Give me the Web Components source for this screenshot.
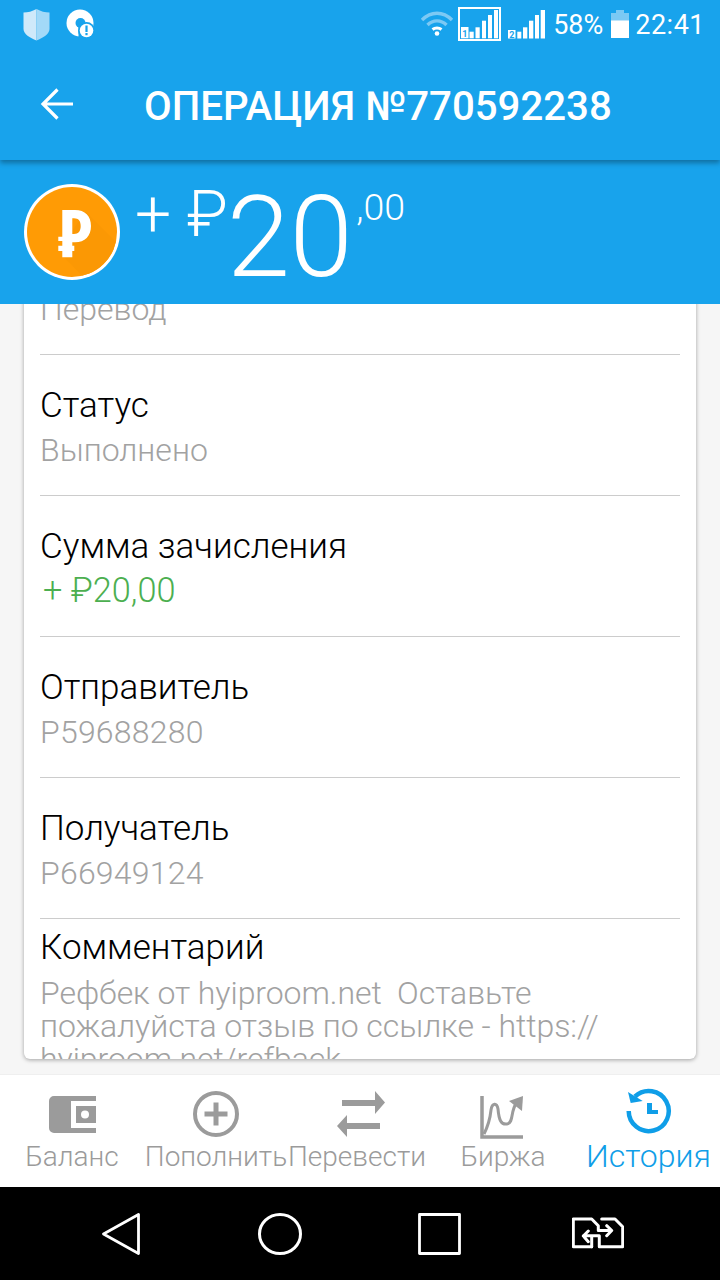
<!DOCTYPE html>
<html><head><meta charset="utf-8">
<style>html,body{margin:0;padding:0;background:#f5f5f5}body{width:720px;height:1280px;overflow:hidden;font-family:Roboto,"Noto Sans",sans-serif}</style>
</head><body>
<op-screen>
  <op-status slot="status"></op-status>
  <op-appbar slot="appbar" title="ОПЕРАЦИЯ №770592238"></op-appbar>
  <op-amount slot="amount"></op-amount>
  <op-card slot="content">
    <op-row label="Тип" value="Перевод"></op-row>
    <op-row label="Статус" value="Выполнено"></op-row>
    <op-row label="Сумма зачисления" value="+ ₽20,00" tone="green"></op-row>
    <op-row label="Отправитель" value="P59688280" tone="num"></op-row>
    <op-row label="Получатель" value="P66949124" tone="num"></op-row>
    <op-row label="Комментарий" value="Рефбек от hyiproom.net  Оставьте пожалуйста отзыв по ссылке - https:// hyiproom.net/refback" tone="long"></op-row>
  </op-card>
  <op-tabs slot="tabs"></op-tabs>
  <op-nav slot="nav"></op-nav>
</op-screen>
<script>
function def(name,html,init){
  customElements.define(name,class extends HTMLElement{
    connectedCallback(){
      if(this.shadowRoot)return;
      const r=this.attachShadow({mode:'open'});
      r.innerHTML=html;
      if(init)init(this,r);
    }
  });
}
def('op-screen',`<style>
:host{display:flex;flex-direction:column;width:720px;height:1280px;overflow:hidden;position:relative}
.top{background:#18a3ec;height:160px;flex:none;display:flex;flex-direction:column;box-shadow:0 3px 5px rgba(0,0,0,.32);position:relative;z-index:2}
.amt{flex:none;height:144px;position:relative;z-index:1}
.content{flex:1;min-height:0;overflow:hidden;background:#f6f6f6}
.tabs{flex:none;height:112px}.nav{flex:none;height:93px}
</style>
<div class="top"><slot name="status"></slot><slot name="appbar"></slot></div>
<div class="amt"><slot name="amount"></slot></div>
<div class="content"><slot name="content"></slot></div>
<div class="tabs"><slot name="tabs"></slot></div>
<div class="nav"><slot name="nav"></slot></div>`);

def('op-status',`<style>
:host{display:flex;align-items:center;height:50px;flex:none;color:#fff;font:400 27px Roboto,sans-serif;padding:0 15px 0 23px;box-sizing:border-box}
.sp{flex:1}svg{display:block;flex:none}
text{font:700 9px Roboto,sans-serif;fill:#18a3ec}
</style>
<svg width="27" height="33" viewBox="0 0 27 33" style="margin-top:-1px"><path d="M13.5 1 C9 3.5 5 4.5 .5 4.5 V21 C.5 26 7 30 13.5 32.5Z" fill="#cfe9fa"/><path d="M13.5 1 C18 3.5 22 4.5 26.5 4.5 V21 C26.5 26 20 30 13.5 32.5Z" fill="#a3d9f8"/></svg>
<svg width="30" height="30" viewBox="0 0 30 30" style="margin-left:16px;margin-top:-2px">
<circle cx="14" cy="14" r="13.500" fill="#fff"/><circle cx="14.500" cy="14" r="5" fill="#18a3ec"/><rect x="12.500" y="16" width="4" height="12" fill="#18a3ec"/><circle cx="20.500" cy="21.500" r="8.500" fill="#18a3ec"/><circle cx="20.500" cy="21.500" r="6.800" fill="#fff"/><rect x="19.400" y="16.500" width="2.200" height="6.500" fill="#18a3ec"/><rect x="19.400" y="24" width="2.200" height="2.200" fill="#18a3ec"/></svg>
<span class="sp"></span>
<svg width="34" height="26" viewBox="0 0 34 26" style="margin-right:4px;margin-top:-5px" fill="none">
<path d="M2 10 C11 1 23 1 32 10" stroke="#7cc9f4" stroke-width="3.400"/><path d="M7.500 15 C13 9.500 21 9.500 26.500 15" stroke="#7cc9f4" stroke-width="3.400"/><path d="M12.500 19.500 C15 17.500 19 17.500 21.500 19.500" stroke="#fff" stroke-width="3"/><circle cx="17" cy="23.500" r="2.300" fill="#fff"/></svg>
<svg width="44" height="35" viewBox="0 0 44 35" style="margin-right:6px;margin-top:-1px">
<rect x="1" y="1" width="41" height="32" fill="none" stroke="#fff" stroke-width="2"/>
<rect x="3" y="20" width="7.500" height="11.300" fill="#fff"/><text x="4.200" y="30">1</text>
<rect x="11.500" y="24.700" width="4.200" height="6.600" fill="#fff"/><rect x="17.500" y="20.300" width="4.200" height="11" fill="#fff"/><rect x="24" y="13.700" width="4" height="17.600" fill="#fff"/><rect x="30" y="8" width="4" height="23.300" fill="#fff"/><rect x="36" y="3" width="4" height="28.300" fill="#fff"/></svg>
<svg width="38" height="29" viewBox="0 0 38 29" style="margin-right:7px;margin-top:-2px">
<rect x="0" y="20" width="7.500" height="8.500" fill="#fff"/><text x="1.200" y="28">2</text>
<rect x="9.300" y="21.700" width="4" height="6.800" fill="#fff"/><rect x="15" y="17.300" width="4.300" height="11.200" fill="#fff"/><rect x="21" y="10.700" width="4.300" height="17.800" fill="#fff"/><rect x="27" y="5" width="4" height="23.500" fill="#fff"/><rect x="32.700" y="0" width="4.300" height="28.500" fill="#fff"/></svg>
<span style="margin-right:8px;margin-top:0">58%</span>
<svg width="18" height="28" viewBox="0 0 18 28" style="margin-right:6px;margin-top:-2px"><path d="M5 0h8v3h5v8H0V3h5z" fill="#7cc9f4"/><rect y="10.500" width="18" height="17.500" fill="#fff"/></svg>
<span style="letter-spacing:.5px;margin-top:0">22:41</span>`);

def('op-appbar',`<style>
:host{display:flex;align-items:center;flex:1;color:#fff;padding-left:40px;box-sizing:border-box}
svg{display:block;flex:none}
.t{margin-left:71px;font:500 40.200px Roboto,sans-serif;white-space:nowrap;margin-top:2px}
</style>
<svg width="33" height="32" viewBox="0 0 33 32" fill="none" stroke="#fff" stroke-width="3.200" style="margin-top:-2px"><path d="M33 16H3M17.500 1.500 3 16l14.500 14.500"/></svg>
<span class="t"></span>`,(h,r)=>{r.querySelector('.t').textContent=h.getAttribute('title')});

def('op-amount',`<style>
:host{display:flex;height:144px;background:#18a3ec;color:#fff;position:relative;padding-left:24px;box-sizing:border-box;font-family:Roboto,sans-serif;font-weight:300}
svg{display:block;flex:none;margin-top:24px}
.p{font-size:64px;line-height:64px;margin:23px 0 0 15px;white-space:nowrap;height:64px}
.b{font-size:114px;line-height:114px;margin:20px 0 0 -1px;letter-spacing:-.5px}
.c{font-size:37.500px;line-height:39px;margin:28px 0 0 4px}
</style>
<svg width="96" height="96" viewBox="0 0 96 96">
<defs><clipPath id="cc"><circle cx="48" cy="48" r="45"/></clipPath></defs>
<circle cx="48" cy="48" r="48" fill="#fff"/><circle cx="48" cy="48" r="45" fill="#ff9b05"/>
<path clip-path="url(#cc)" d="M62 28 L100 66 V100 H66 L40 73 38 60Z" fill="#fb9804"/>
<path d="M38.300 26H51C61 26 67 32 67 42S61 58.300 51 58.300H48.300V61.700H50.300V67H48.300V73.300H38.300V67H34.300V61.700H38.300V57H34.300V52.700H38.300ZM48.300 34.300V50H50C54.500 50 56.700 47 56.700 42S54.500 34.300 50 34.300Z" fill="#fff" fill-rule="evenodd"/></svg>
<span class="p">+ ₽</span><span class="b">20</span><span class="c">,00</span>`);

def('op-card',`<style>
:host{display:block;width:672px;height:845px;margin:-90px 0 0 24px;background:#fff;border-radius:0 0 6px 6px;box-shadow:0 1px 4px rgba(0,0,0,.35);overflow:hidden;box-sizing:border-box;padding:0 16px}
</style><slot></slot>`);

def('op-row',`<style>
:host{display:block;height:141px;box-sizing:border-box;border-bottom:1px solid #ccc;font-family:Roboto,sans-serif}
.l{font-size:35px;line-height:38px;color:#000;font-weight:300;padding-top:32px;white-space:nowrap}
.v{font-size:32px;line-height:38px;color:#a2a2a2;font-weight:300;padding-top:6px}
:host([tone=green]) .v{color:#4caf50;padding-top:5px;font-size:34.300px;padding-left:3px}
:host([tone=num]) .v{letter-spacing:.22px}
:host([tone=long]){border:0;height:auto}
:host([tone=long]) .l{padding-top:10px}
:host([tone=long]) .v{line-height:33px;padding-top:10px;white-space:pre-wrap;width:600px;letter-spacing:-.06px}
</style><div class="l"></div><div class="v"></div>`,(h,r)=>{
  r.querySelector('.l').textContent=h.getAttribute('label');
  r.querySelector('.v').textContent=h.getAttribute('value');
});

def('op-tabs',`<style>
:host{display:block;height:112px;background:#fff;position:relative;font:300 28px Roboto,sans-serif;color:#9b9b9b;box-shadow:0 -1px 0 #efefef}
.row{display:grid;grid-template-columns:144px 144px 145px 144px 143px;height:112px}
.t{display:flex;flex-direction:column;align-items:center;white-space:nowrap}
.i{height:64px;display:flex;align-items:flex-end;justify-content:center;flex:none;width:60px}
svg{display:block}
.x{margin-top:-1px;line-height:38px}
.on{color:#0f9ee8}.on .x{font-size:32px;margin-top:-2px}
</style>
<div class="row">
<div class="t"><div class="i"><svg width="47" height="37" viewBox="0 0 47 37" style="margin-bottom:6px"><path d="M5 0H47V5H22V32H47V37H5A5 5 0 0 1 0 32V5A5 5 0 0 1 5 0Z" fill="#9b9b9b"/><path d="M27 10H47V27H27z" fill="#9b9b9b"/><circle cx="36" cy="18.500" r="4" fill="#fff"/></svg></div><span class="x">Баланс</span></div>
<div class="t"><div class="i"><svg width="46" height="46" viewBox="0 0 46 46" style="margin-bottom:2px"><circle cx="23" cy="23" r="21" fill="none" stroke="#9b9b9b" stroke-width="4"/><path d="M23 11.500v23M11.500 23h23" stroke="#9b9b9b" stroke-width="5"/></svg></div><span class="x">Пополнить</span></div>
<div class="t"><div class="i"><svg width="48" height="46" viewBox="0 0 48 46" style="margin-bottom:2px"><path d="M5 9H38V0L48 11.500 38 23V15H5zM43 32H10V24L0 35 10 46V38H43z" fill="#9b9b9b"/></svg></div><span class="x" style="margin-right:7px">Перевести</span></div>
<div class="t"><div class="i"><svg width="44" height="43" viewBox="0 0 44 43" fill="none" stroke="#9b9b9b" style="margin-right:7px"><path d="M2 0V41H43" stroke-width="3.500"/><path d="M4 38C8 30 10 24 11 14 12 7 17 6 18 13 19 24 21 29 27 28 34 27 30 15 37 6" stroke-width="3"/><path d="M29 5 43 0 42 15Z" fill="#9b9b9b" stroke="none"/></svg></div><span class="x" style="margin-right:4px">Биржа</span></div>
<div class="t on"><div class="i"><svg width="46" height="46" viewBox="0 0 46 46" style="margin-bottom:5px"><path d="M9 8.500A20 20 0 1 1 2.700 23" fill="none" stroke="#0f9ee8" stroke-width="4.500"/><path d="M2 4 16.700 13 4.700 15Z" fill="#0f9ee8"/><path d="M21 15H26V22H32V26H21z" fill="#0f9ee8"/></svg></div><span class="x">История</span></div>
</div>`);

def('op-nav',`<style>
:host{display:flex;align-items:center;height:93px;background:#000;padding:0 0 0 102px;box-sizing:border-box;position:relative}
svg{display:block;flex:none}
</style>
<svg width="38" height="42" viewBox="0 0 38 42" style="margin:1px 0 0 0" fill="none" stroke="#fff" stroke-width="2.800" stroke-linejoin="round"><path d="M36.500 1.500V40.500L1.500 21Z"/></svg>
<svg width="44" height="42" viewBox="0 0 44 42" style="margin:1px 0 0 118px" fill="none" stroke="#fff" stroke-width="3"><ellipse cx="22" cy="21" rx="20.500" ry="19.500"/></svg>
<svg width="43" height="42" viewBox="0 0 43 42" style="margin:1px 0 0 116px" fill="none" stroke="#fff" stroke-width="2.800" stroke-linejoin="round"><path d="M1.500 1.500H41.500V40.500H1.500Z"/></svg>
<svg width="52" height="33" viewBox="0 0 52 33" style="margin:0 0 0 111px" fill="none" stroke="#fff" stroke-width="3" stroke-linejoin="round" stroke-linecap="round"><path d="M19.700 29.700H1.300V2H19.700L26.300 8.700V13.500H39.700M34.700 8.700 39.700 13.500 34.700 18.700"/><path d="M29.700 2H43L50.700 9.700V29.700H27.300V18.700H11.300M16.300 14 11.300 19 16.300 24.700M19.700 19V29.700"/></svg>`);
</script>
</body></html>
